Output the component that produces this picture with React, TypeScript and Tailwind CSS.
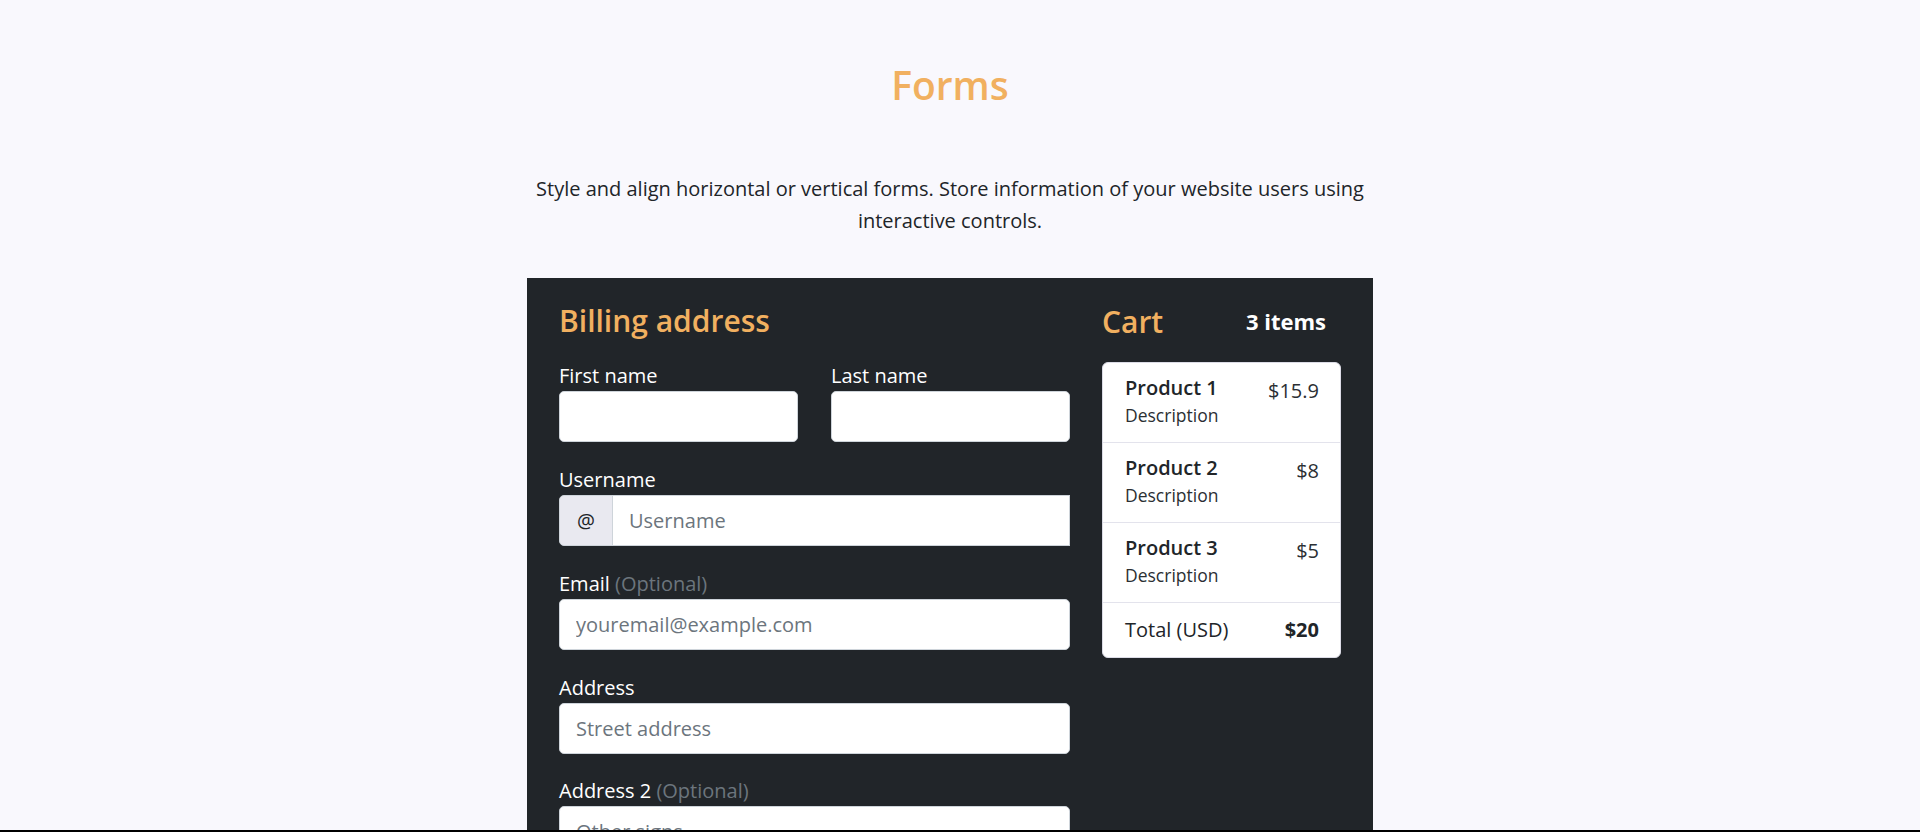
const products = [
  { name: 'Product 1', desc: 'Description', price: '$15.9' },
  { name: 'Product 2', desc: 'Description', price: '$8' },
  { name: 'Product 3', desc: 'Description', price: '$5' },
]

function Label({ text, optional }: { text: string; optional?: boolean }) {
  return (
    <label className="block text-[20px] leading-[30px] text-white">
      {text}
      {optional && <span className="text-[#6c757d]"> (Optional)</span>}
    </label>
  )
}

function TextInput({ placeholder }: { placeholder?: string }) {
  return (
    <input
      type="text"
      placeholder={placeholder}
      className="block h-[51px] w-full rounded-[5px] border border-[#ced4da] bg-white px-4 text-[20px] text-[#212529] outline-none placeholder:text-[#6c757d]"
    />
  )
}

export default function App() {
  return (
    <div className="min-h-screen bg-[#f9f8fd] font-['Open_Sans','Noto_Sans',sans-serif] text-[#212529]">
      <div className="pr-[20px]">
        <section className="mx-auto w-[846px] pt-[61px]">
          <h2 className="text-center text-[39px] leading-[48px] font-semibold text-[#f1b060]">Forms</h2>
          <p className="mt-[64px] text-center text-[20px] leading-[32px]">
            Style and align horizontal or vertical forms. Store information of your website users using interactive controls.
          </p>

          {/* Checkout panel */}
          <div className="mt-[41px] flex gap-8 bg-[#212529] px-8 pt-[25px] pb-8">
            <form className="flex-1">
              <h4 className="mb-[22px] text-[30px] leading-[36px] font-semibold text-[#f1b060]">Billing address</h4>

              <div className="grid grid-cols-2 gap-x-[33px]">
                <div>
                  <Label text="First name" />
                  <TextInput />
                </div>
                <div>
                  <Label text="Last name" />
                  <TextInput />
                </div>
              </div>

              <div className="mt-[23px]">
                <Label text="Username" />
                <div className="flex h-[51px]">
                  <span className="flex w-[54px] items-center justify-center rounded-l-[5px] border border-[#ced4da] bg-[#e9e9f0] text-[20px]">
                    @
                  </span>
                  <input
                    type="text"
                    placeholder="Username"
                    className="-ml-px block h-full flex-1 border border-[#ced4da] bg-white px-4 text-[20px] outline-none placeholder:text-[#6c757d]"
                  />
                </div>
              </div>

              <div className="mt-[23px]">
                <Label text="Email" optional />
                <TextInput placeholder="youremail@example.com" />
              </div>

              <div className="mt-[23px]">
                <Label text="Address" />
                <TextInput placeholder="Street address" />
              </div>

              <div className="mt-[22px]">
                <Label text="Address 2" optional />
                <TextInput placeholder="Other signs" />
              </div>
            </form>

            <aside className="w-[239px]">
              <div className="mb-[23px] flex h-[36px] items-center justify-between">
                <span className="text-[30px] font-semibold text-[#f1b060]">Cart</span>
                <span className="pr-[15px] text-[22px] font-bold text-white">3 items</span>
              </div>

              <ul className="overflow-hidden rounded-[6px] border border-[#dcdce6] bg-white">
                {products.map((p) => (
                  <li key={p.name} className="flex justify-between border-b border-[#e3e3ec] pt-[13px] pr-[21px] pb-[14px] pl-[22px]">
                    <div>
                      <h6 className="text-[20px] leading-[24px] font-semibold">{p.name}</h6>
                      <small className="mt-[2px] block text-[17.5px] leading-[26px] text-[#2b2f33]">{p.desc}</small>
                    </div>
                    <span className="text-[20px] leading-[30px] text-[#2b2f33]">{p.price}</span>
                  </li>
                ))}
                <li className="flex justify-between py-[12px] pr-[21px] pl-[22px] text-[20px] leading-[30px]">
                  <span>Total (USD)</span>
                  <strong>$20</strong>
                </li>
              </ul>
            </aside>
          </div>
        </section>
      </div>
      <div className="fixed inset-x-0 bottom-0 h-[2px] bg-black" />
    </div>
  )
}
